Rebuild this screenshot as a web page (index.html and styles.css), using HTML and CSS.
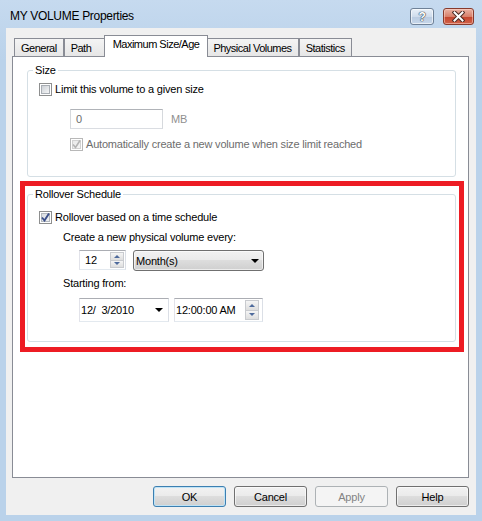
FILE: index.html
```html
<!DOCTYPE html>
<html lang="en">
<head>
    <meta charset="UTF-8">
    <title>MY VOLUME Properties</title>
    <link rel="stylesheet" href="styles.css">
</head>
<body>
    <div class="window">
        <div class="titlebar">
            <span class="title">MY VOLUME Properties</span>
            <div class="caption">
                <span class="cap-btn cap-help">?</span>
                <span class="cap-btn cap-close">
                    <svg width="13" height="11" viewBox="0 0 13 11">
                        <path d="M2.5 1.5 L10.5 9.5 M10.5 1.5 L2.5 9.5" stroke="#4a2a24" stroke-width="4" stroke-linecap="square"/>
                        <path d="M2.5 1.5 L10.5 9.5 M10.5 1.5 L2.5 9.5" stroke="#fff" stroke-width="2" stroke-linecap="square"/>
                    </svg>
                </span>
            </div>
        </div>

        <div class="client">
            <div class="tabs">
                <span class="tab">General</span>
                <span class="tab">Path</span>
                <span class="tab active">Maximum Size/Age</span>
                <span class="tab">Physical Volumes</span>
                <span class="tab">Statistics</span>
            </div>

            <div class="panel">
                <fieldset class="group size-group">
                    <legend>Size</legend>
                    <div class="check-row">
                        <span class="check"></span>Limit this volume to a given size
                    </div>
                    <div class="size-row">
                        <span class="textbox">0</span>
                        <span class="unit">MB</span>
                    </div>
                    <div class="check-row auto-row">
                        <span class="check checked disabled">
                            <svg width="9" height="9" viewBox="0 0 9 9"><path d="M1 4.5 L3.5 7.5 L8 0.5" fill="none" stroke="#b4b4b4" stroke-width="1.6"/></svg>
                        </span>Automatically create a new volume when size limit reached
                    </div>
                </fieldset>

                <div class="highlight">
                    <fieldset class="group rollover-group">
                        <legend>Rollover Schedule</legend>
                        <div class="check-row">
                            <span class="check checked">
                                <svg width="9" height="9" viewBox="0 0 9 9"><path d="M1 4.5 L3.5 7.5 L8 0.5" fill="none" stroke="#3b4f8a" stroke-width="1.9"/></svg>
                            </span>Rollover based on a time schedule
                        </div>
                        <div class="field-label">Create a new physical volume every:</div>
                        <div class="control-row">
                            <span class="spinner">
                                <span class="value">12</span>
                                <span class="spin"><span class="spin-up"></span><span class="spin-down"></span></span>
                            </span>
                            <span class="combo">
                                <span>Month(s)</span>
                                <span class="arrow"></span>
                            </span>
                        </div>
                        <div class="field-label">Starting from:</div>
                        <div class="control-row date-row">
                            <span class="picker date">
                                <span class="value">12/  3/2010</span>
                                <span class="arrow"></span>
                            </span>
                            <span class="picker time">
                                <span class="value">12:00:00 AM</span>
                                <span class="spin"><span class="spin-up"></span><span class="spin-down"></span></span>
                            </span>
                        </div>
                    </fieldset>
                </div>
            </div>

            <div class="buttons">
                <button class="btn default">OK</button>
                <button class="btn">Cancel</button>
                <button class="btn" disabled>Apply</button>
                <button class="btn">Help</button>
            </div>
        </div>
    </div>
</body>
</html>
```

FILE: styles.css
```css
body {
    margin: 0;
    font-family: "Liberation Sans", Arial, sans-serif;
    font-size: 11px;
    letter-spacing: -0.2px;
    color: #000;
}
.window {
    width: 482px;
    height: 521px;
    background: linear-gradient(#c6daef, #bad2ea 60px);
    display: flex;
    flex-direction: column;
}
.titlebar {
    height: 28px;
    display: flex;
    justify-content: space-between;
    align-items: flex-start;
}
.title {
    font-size: 12px;
    letter-spacing: -0.3px;
    line-height: 14px;
    padding: 9px 0 0 10px;
}
.caption {
    display: flex;
    gap: 9px;
    margin: 8px 8px 0 0;
}
.cap-btn {
    box-sizing: border-box;
    height: 17px;
    border-radius: 3px;
    display: flex;
    align-items: center;
    justify-content: center;
}
.cap-help {
    width: 24px;
    border: 1px solid #6f8197;
    background: linear-gradient(#e9f0f8, #cfdcec 50%, #b9cbe1 51%, #c7d7ea);
    box-shadow: inset 0 0 0 1px rgba(255, 255, 255, 0.6);
    color: #fff;
    font-weight: bold;
    font-size: 12px;
    text-shadow: 0 0 1px #2d3a4a, 0 0 1px #2d3a4a, 0 0 1px #2d3a4a;
}
.cap-close {
    width: 31px;
    border: 1px solid #873a2c;
    background: linear-gradient(#eab3a4, #d8806b 50%, #c4432c 51%, #d0634a);
    box-shadow: inset 0 0 0 1px rgba(255, 220, 210, 0.5);
}

.client {
    flex: 1;
    margin: 0 6px 6px;
    background: #f0f0f0;
    padding: 7px 7px 0 6px;
}

.tabs {
    display: flex;
    align-items: flex-end;
    height: 22px;
    padding-left: 2px;
    margin-bottom: -1px;
    position: relative;
}
.tab {
    box-sizing: border-box;
    height: 18px;
    min-width: 42px;
    margin-bottom: 1px;
    padding: 2px 6px 0;
    line-height: 14px;
    letter-spacing: -0.5px;
    border: 1px solid #898c95;
    border-bottom: none;
    background: linear-gradient(#f4f4f4, #e6e6e6);
    white-space: nowrap;
}
.tab.active {
    height: 22px;
    margin: 0 -2px;
    padding: 1px 8px 0;
    background: #fff;
    position: relative;
    z-index: 1;
}

.panel {
    box-sizing: border-box;
    width: 457px;
    height: 422px;
    border: 1px solid #898c95;
    background: #fff;
    padding-top: 7px;
}

.group {
    margin: 0;
    padding: 0;
    min-width: 0;
    border: 1px solid #d5dfe5;
    border-radius: 3px;
}
.group legend {
    margin-left: 5px;
    padding: 0 2px;
    line-height: 13px;
}
.size-group {
    margin: 0 12px 0 14px;
}

.check-row {
    display: flex;
    align-items: center;
    height: 13px;
    line-height: 13px;
    margin: 6px 0 0 11px;
    white-space: nowrap;
}
.check {
    box-sizing: border-box;
    width: 13px;
    height: 13px;
    margin-right: 3px;
    border: 1px solid #8e8f8f;
    background: #fff;
    padding: 1px;
    display: flex;
}
.check::before {
    content: "";
    flex: 1;
    border: 1px solid #a9aeb4;
    background: linear-gradient(135deg, #cdd1d6, #f4f5f6);
}
.check.checked::before {
    display: none;
}
.check.checked {
    align-items: center;
    justify-content: center;
    padding: 0;
    background: linear-gradient(135deg, #d3d7dc, #f6f7f8);
    box-shadow: inset 0 0 0 1px #fff, inset 0 0 0 2px #b3b8be;
}
.check.disabled {
    border-color: #b8b8b8;
    background: linear-gradient(135deg, #e6e6e6, #f8f8f8);
    box-shadow: inset 0 0 0 1px #fff, inset 0 0 0 2px #d2d2d2;
}

.size-row {
    display: flex;
    align-items: center;
    margin: 13px 0 0 42px;
}
.textbox {
    box-sizing: border-box;
    width: 93px;
    height: 20px;
    padding-left: 5px;
    line-height: 18px;
    border: 1px solid #b8bcc2;
    border-color: #b0b3b8 #d6d9dd #dadde2 #d6d9dd;
    color: #6d6d6d;
}
.unit {
    margin-left: 8px;
    color: #8f8f8f;
}
.auto-row {
    margin: 9px 0 25px 42px;
    color: #6d6d6d;
}

.highlight {
    box-sizing: border-box;
    width: 444px;
    margin: 4px 0 0 7px;
    border: 5px solid #ed1c24;
    padding: 2px 3px 5px 2px;
}
.rollover-group .check-row {
    margin-top: 10px;
}
.field-label {
    line-height: 13px;
    margin: 6px 0 0 35px;
}
.control-row {
    display: flex;
    align-items: flex-start;
    gap: 7px;
    margin: 6px 0 0 51px;
}
.field-label + .control-row.date-row {
    margin: 8px 0 19px 51px;
    gap: 5px;
}
.field-label:nth-of-type(2) {
    margin-top: 7px;
}

.spinner,
.picker {
    box-sizing: border-box;
    display: flex;
    align-items: center;
    justify-content: space-between;
    background: #fff;
    border: 1px solid #c4c7cc;
    border-color: #abadb3 #dbdfe6 #e3e9ef #e2e3ea;
}
.spinner {
    width: 47px;
    height: 20px;
    padding: 1px 1px 1px 5px;
}
.picker {
    height: 24px;
}
.picker.date {
    width: 90px;
    padding: 0 5px 0 1px;
}
.picker.time {
    width: 89px;
    padding: 0 3px 0 1px;
}
.value {
    white-space: pre;
}
.spin {
    width: 14px;
    height: 16px;
    display: flex;
    flex-direction: column;
}
.picker .spin {
    height: 20px;
}
.spin-up,
.spin-down {
    flex: 1;
    border: 1px solid #c9cbcf;
    background: linear-gradient(#f5f5f5, #dedede);
    display: flex;
    align-items: center;
    justify-content: center;
}
.spin-down {
    border-top: none;
}
.spin-up::after,
.spin-down::after {
    content: "";
    border-left: 3px solid transparent;
    border-right: 3px solid transparent;
}
.spin-up::after {
    border-bottom: 3px solid #4e6a9c;
}
.spin-down::after {
    border-top: 3px solid #4e6a9c;
}

.combo {
    box-sizing: border-box;
    width: 131px;
    height: 21px;
    display: flex;
    align-items: center;
    justify-content: space-between;
    padding: 0 4px 0 2px;
    border: 1px solid #707070;
    border-radius: 3px;
    background: linear-gradient(#f2f2f2, #ebebeb 45%, #dddddd 50%, #cfcfcf);
    box-shadow: inset 0 0 0 1px rgba(255, 255, 255, 0.6);
}
.arrow {
    border-left: 4px solid transparent;
    border-right: 4px solid transparent;
    border-top: 4px solid #000;
}

.buttons {
    display: flex;
    justify-content: flex-end;
    gap: 8px;
    margin-top: 8px;
}
.btn {
    box-sizing: border-box;
    width: 73px;
    height: 21px;
    padding: 0;
    font: inherit;
    letter-spacing: inherit;
    color: #000;
    border: 1px solid #707070;
    border-radius: 3px;
    background: linear-gradient(#f2f2f2, #ebebeb 45%, #dddddd 50%, #cfcfcf);
    box-shadow: inset 0 0 0 1px rgba(255, 255, 255, 0.6);
}
.btn.default {
    border-color: #3c7fb1;
    box-shadow: inset 0 0 0 1px #bfe3f6;
}
.btn:disabled {
    border-color: #adb2b5;
    background: #f4f4f4;
    box-shadow: none;
    color: #838383;
}
```
